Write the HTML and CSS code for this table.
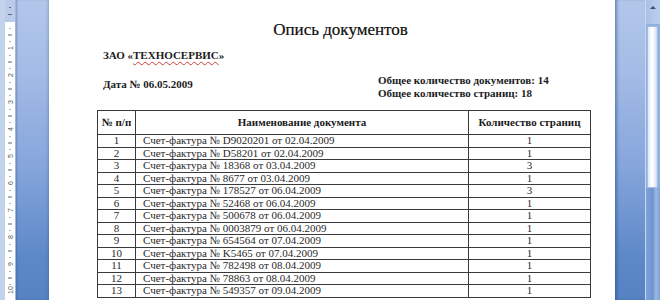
FILE: index.html
```html
<!DOCTYPE html>
<html lang="ru">
<head>
<meta charset="utf-8">
<title>Опись документов</title>
<link rel="stylesheet" href="styles.css">
</head>
<body>
<div class="window">
  <div class="ruler">
    <svg width="16" height="300" viewBox="0 0 16 300">
      <rect x="0" y="0" width="16" height="300" fill="#c3d3ee"/>
      <rect x="5" y="0" width="10" height="22" fill="#b9cbe8"/>
      <rect x="5" y="22" width="10" height="278" fill="#ffffff"/>
      <rect x="15" y="0" width="1" height="300" fill="#9fb6dc"/>
      <g fill="#666">
        <rect x="9" y="7" width="2" height="1"/>
        <rect x="8" y="14" width="4" height="1"/>
      </g>
      <g fill="#666">
        <rect x="9.5" y="28" width="1" height="1"/>
        <rect x="8" y="34.5" width="4" height="1"/>
        <rect x="9.5" y="41" width="1" height="1"/>
        <rect x="9.5" y="55" width="1" height="1"/>
        <rect x="8" y="61.5" width="4" height="1"/>
        <rect x="9.5" y="68" width="1" height="1"/>
        <rect x="9.5" y="82" width="1" height="1"/>
        <rect x="8" y="88.5" width="4" height="1"/>
        <rect x="9.5" y="95" width="1" height="1"/>
        <rect x="9.5" y="109" width="1" height="1"/>
        <rect x="8" y="115.5" width="4" height="1"/>
        <rect x="9.5" y="122" width="1" height="1"/>
        <rect x="9.5" y="136" width="1" height="1"/>
        <rect x="8" y="142.5" width="4" height="1"/>
        <rect x="9.5" y="149" width="1" height="1"/>
        <rect x="9.5" y="163" width="1" height="1"/>
        <rect x="8" y="169.5" width="4" height="1"/>
        <rect x="9.5" y="176" width="1" height="1"/>
        <rect x="9.5" y="190" width="1" height="1"/>
        <rect x="8" y="196.5" width="4" height="1"/>
        <rect x="9.5" y="203" width="1" height="1"/>
        <rect x="9.5" y="217" width="1" height="1"/>
        <rect x="8" y="223.5" width="4" height="1"/>
        <rect x="9.5" y="230" width="1" height="1"/>
        <rect x="9.5" y="244" width="1" height="1"/>
        <rect x="8" y="250.5" width="4" height="1"/>
        <rect x="9.5" y="257" width="1" height="1"/>
        <rect x="9.5" y="271" width="1" height="1"/>
        <rect x="8" y="277.5" width="4" height="1"/>
        <rect x="9.5" y="284" width="1" height="1"/>
      </g>
      <g class="rnum" fill="#555" font-size="7" text-anchor="middle">
        <text transform="translate(12.5 48) rotate(-90)">1</text>
        <text transform="translate(12.5 75) rotate(-90)">2</text>
        <text transform="translate(12.5 102) rotate(-90)">3</text>
        <text transform="translate(12.5 129) rotate(-90)">4</text>
        <text transform="translate(12.5 156) rotate(-90)">5</text>
        <text transform="translate(12.5 183) rotate(-90)">6</text>
        <text transform="translate(12.5 210) rotate(-90)">7</text>
        <text transform="translate(12.5 237) rotate(-90)">8</text>
        <text transform="translate(12.5 264) rotate(-90)">9</text>
        <text transform="translate(12.5 290) rotate(-90)">10</text>
      </g>
    </svg>
  </div>
  <div class="gutter gutter-left"></div>
  <div class="page">
    <div class="doc">
      <h1 class="title">Опись документов</h1>
      <p class="company">ЗАО «<span class="misspelled">ТЕХНОСЕРВИС</span>»</p>
      <div class="info">
        <p class="date">Дата № 06.05.2009</p>
        <div class="totals">
          <p>Общее количество документов: 14</p>
          <p>Общее количество страниц: 18</p>
        </div>
      </div>
      <table class="list">
        <colgroup>
          <col class="c-num">
          <col class="c-name">
          <col class="c-pages">
        </colgroup>
        <thead>
          <tr><th>№ п/п</th><th>Наименование документа</th><th>Количество страниц</th></tr>
        </thead>
        <tbody>
          <tr><td>1</td><td class="name">Счет-фактура № D9020201 от 02.04.2009</td><td>1</td></tr>
          <tr><td>2</td><td class="name">Счет-фактура № D58201 от 02.04.2009</td><td>1</td></tr>
          <tr><td>3</td><td class="name">Счет-фактура № 18368 от 03.04.2009</td><td>3</td></tr>
          <tr><td>4</td><td class="name">Счет-фактура № 8677 от 03.04.2009</td><td>1</td></tr>
          <tr><td>5</td><td class="name">Счет-фактура № 178527 от 06.04.2009</td><td>3</td></tr>
          <tr><td>6</td><td class="name">Счет-фактура № 52468 от 06.04.2009</td><td>1</td></tr>
          <tr><td>7</td><td class="name">Счет-фактура № 500678 от 06.04.2009</td><td>1</td></tr>
          <tr><td>8</td><td class="name">Счет-фактура № 0003879 от 06.04.2009</td><td>1</td></tr>
          <tr><td>9</td><td class="name">Счет-фактура № 654564 от 07.04.2009</td><td>1</td></tr>
          <tr><td>10</td><td class="name">Счет-фактура № K5465 от 07.04.2009</td><td>1</td></tr>
          <tr><td>11</td><td class="name">Счет-фактура № 782498 от 08.04.2009</td><td>1</td></tr>
          <tr><td>12</td><td class="name">Счет-фактура № 78863 от 08.04.2009</td><td>1</td></tr>
          <tr><td>13</td><td class="name">Счет-фактура № 549357 от 09.04.2009</td><td>1</td></tr>
        </tbody>
      </table>
    </div>
  </div>
  <div class="gutter gutter-right"></div>
  <div class="scrollbar">
    <div class="sb-btn"><span class="sb-arrow"></span></div>
    <div class="sb-thumb"></div>
    <div class="sb-track"></div>
  </div>
</div>
</body>
</html>
```

FILE: styles.css
```css
html, body {
  margin: 0;
  padding: 0;
  width: 660px;
  height: 300px;
  overflow: hidden;
  background: #ffffff;
}

.window {
  display: flex;
  width: 660px;
  height: 300px;
  overflow: hidden;
}

.ruler {
  width: 16px;
  flex: none;
  height: 300px;
}
.ruler svg { display: block; }
.rnum { font-family: "Liberation Sans", Arial, sans-serif; }

.gutter {
  flex: none;
  height: 300px;
  background: linear-gradient(to bottom, #b2c7ea 0%, #a3bbe5 25%, #86a6dc 55%, #5e89c8 85%, #5682c3 100%);
}
.gutter-left {
  width: 33px;
  box-shadow: inset 2px 0 2px -1px rgba(40, 70, 130, 0.35), inset -2px 0 3px -1px rgba(40, 70, 130, 0.3);
}
.gutter-right {
  width: 30px;
  box-shadow: inset 3px 0 3px -1px rgba(30, 60, 120, 0.45);
}

.page {
  width: 566px;
  flex: none;
  height: 300px;
  background: #ffffff;
  overflow: hidden;
}

.doc {
  width: 493px;
  margin-left: 48px;
  font-family: "Liberation Serif", "Times New Roman", serif;
  color: #1c1c1c;
}

.title {
  margin: 20px 0 0;
  height: 20px;
  line-height: 20px;
  font-size: 17px;
  font-weight: normal;
  text-align: center;
  color: #0d0d0d;
  text-indent: -6px;
  -webkit-text-stroke: 0.2px #0d0d0d;
}

.company {
  margin: 9px 0 0 6px;
  font-size: 11px;
  font-weight: bold;
  line-height: 13px;
}

.misspelled {
  text-decoration: underline wavy #d23a3a;
  text-decoration-thickness: 1px;
  text-underline-offset: 2px;
}

.info {
  display: grid;
  grid-template-columns: 281px 1fr;
  margin-top: 12px;
  font-size: 11px;
  font-weight: bold;
  line-height: 13px;
}
.info p { margin: 0; }
.date {
  padding-top: 4px;
  padding-left: 6px;
}

.list {
  margin-top: 10px;
  width: 493px;
  border-collapse: collapse;
  table-layout: fixed;
  font-size: 11px;
  border: 1px solid #3a3a3a;
}
.c-num { width: 38px; }
.c-name { width: 333px; }
.c-pages { width: 122px; }

.list th {
  height: 23px;
  padding: 0;
  font-weight: bold;
  text-align: center;
  vertical-align: middle;
  border: 1px solid #3a3a3a;
  line-height: 13px;
  color: #1a1a1a;
}

.list td {
  height: 11.5px;
  padding: 0;
  line-height: 11.5px;
  text-align: center;
  border: 1px solid #3a3a3a;
  color: #2a2a2a;
  white-space: nowrap;
}
.list td.name {
  text-align: left;
  padding-left: 7px;
}

.scrollbar {
  width: 15px;
  flex: none;
  height: 300px;
  display: flex;
  flex-direction: column;
  background: #8fb0e0;
  border-left: 1px solid #c9d8f0;
  box-sizing: border-box;
}
.sb-btn {
  height: 24px;
  flex: none;
  display: flex;
  align-items: flex-start;
  justify-content: center;
  padding-top: 6px;
  box-sizing: border-box;
  background: linear-gradient(to right, #a9c1e8, #bcd0ee);
}
.sb-arrow {
  width: 0;
  height: 0;
  border-left: 3px solid transparent;
  border-right: 3px solid transparent;
  border-bottom: 3px solid #3b4f73;
}
.sb-thumb {
  height: 160px;
  flex: none;
  margin: 2px 2px 0 1px;
  background: linear-gradient(to right, #dbe6f6, #ffffff 40%, #f2f6fc 70%, #c5d6ef);
  border: 1px solid #a6bde3;
  border-radius: 1px;
}
.sb-track {
  flex: 1;
  background: linear-gradient(to right, #7ea2d8, #6f95d0 50%, #9cb9e4 70%, #7fa2d8);
}
```
